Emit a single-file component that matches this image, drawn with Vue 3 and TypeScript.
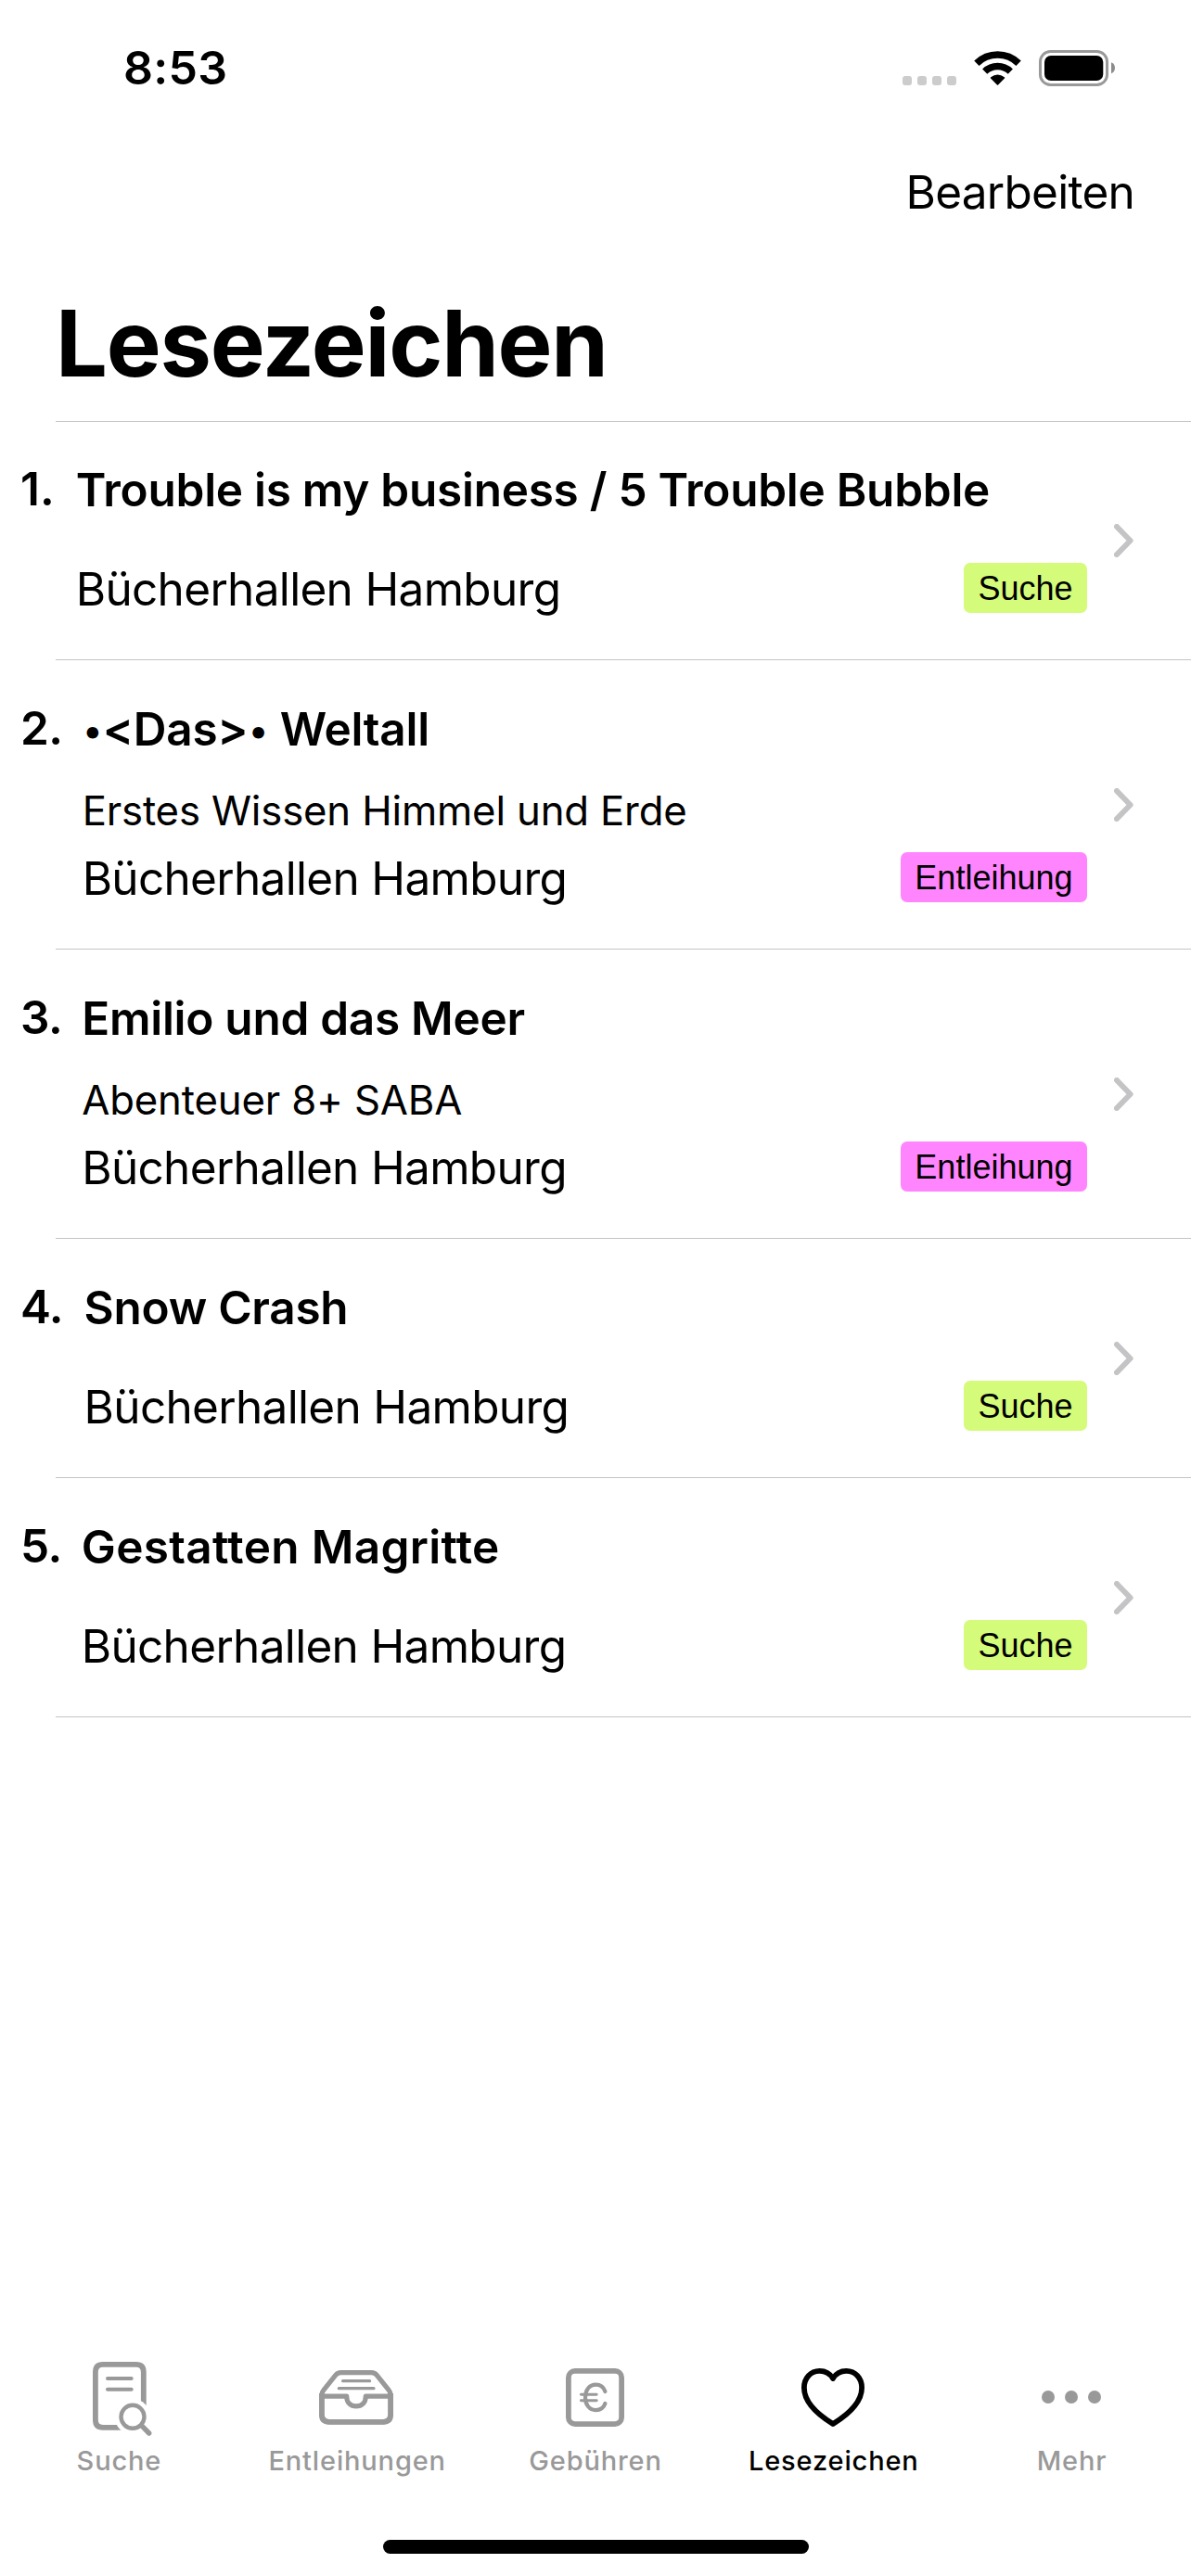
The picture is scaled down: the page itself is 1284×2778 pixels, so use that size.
<script setup lang="ts">
type Origin = 'Suche' | 'Entleihung'

interface Bookmark {
  title: string
  subtitle?: string
  library: string
  origin: Origin
}

const bookmarks: Bookmark[] = [
  { title: 'Trouble is my business / 5 Trouble Bubble', library: 'Bücherhallen Hamburg', origin: 'Suche' },
  { title: '•<Das>• Weltall', subtitle: 'Erstes Wissen Himmel und Erde', library: 'Bücherhallen Hamburg', origin: 'Entleihung' },
  { title: 'Emilio und das Meer', subtitle: 'Abenteuer 8+ SABA', library: 'Bücherhallen Hamburg', origin: 'Entleihung' },
  { title: 'Snow Crash', library: 'Bücherhallen Hamburg', origin: 'Suche' },
  { title: 'Gestatten Magritte', library: 'Bücherhallen Hamburg', origin: 'Suche' },
]

// Sorting marks in catalogue titles are set smaller than the letters.
const titleParts = (title: string): string[] => title.split(/(•)/).filter((part) => part !== '')
</script>

<template>
  <div class="screen">
    <header class="status">
      <span class="time">8:53</span>
      <div class="indicators">
        <svg class="cell" width="58" height="10" viewBox="0 0 58 10" fill="#ccc">
          <rect v-for="n in 4" :key="n" :x="(n - 1) * 16" y="0" width="10" height="10" rx="3" />
        </svg>
        <svg class="wifi" width="51" height="39" viewBox="0 0 51 39" fill="none" stroke="#000">
          <path d="M2.9 14.2A32.3 32.3 0 0 1 48.1 14.2" stroke-width="7.6" />
          <path d="M11.7 23.1A19.7 19.7 0 0 1 39.3 23.1" stroke-width="7.4" />
          <path d="M18.6 30Q25.5 24.8 32.4 30L25.5 37Z" fill="#000" stroke-width="1.6" stroke-linejoin="round" />
        </svg>
        <svg class="battery" width="82" height="39" viewBox="0 0 82 39">
          <rect x="1.5" y="1.5" width="72" height="36" rx="11" fill="none" stroke="#999" stroke-width="3" />
          <rect x="6" y="6" width="63.3" height="27" rx="7" />
          <path d="M78 13.3C80.6 14.2 82 16.6 82 19.3S80.6 24.4 78 25.3Z" fill="#8c8c8c" />
        </svg>
      </div>
    </header>

    <nav class="navbar"><button class="edit" type="button">Bearbeiten</button></nav>
    <h1 class="heading">Lesezeichen</h1>

    <div class="hairline"></div>
    <ol class="list">
      <li v-for="(b, i) in bookmarks" :key="b.title" class="item">
        <div class="row">
          <span class="number">{{ i + 1 }}.</span>
          <div class="body">
            <div class="title"><span v-for="(part, p) in titleParts(b.title)" :key="p" :class="{ mark: part === '•' }">{{ part }}</span></div>
            <div v-if="b.subtitle" class="subtitle">{{ b.subtitle }}</div>
            <div v-else class="spacer"></div>
            <div class="library">
              <span>{{ b.library }}</span>
              <span class="badge" :class="b.origin === 'Suche' ? 'lime' : 'pink'">{{ b.origin }}</span>
            </div>
          </div>
          <svg class="chevron" width="21" height="36" viewBox="0 0 21 36" fill="none" stroke="#c4c4c6" stroke-width="6" stroke-linecap="round" stroke-linejoin="round">
            <path d="M3 3L17.6 18L3 33" />
          </svg>
        </div>
        <div class="hairline"></div>
      </li>
    </ol>

    <footer class="tabs">
      <a class="tab">
        <span class="icon">
          <svg class="doc" width="64" height="80" viewBox="0 0 64 80" fill="none" stroke="currentColor" stroke-linecap="round">
            <path d="M54.8 50V11Q54.8 2.9 46.7 2.9H11Q2.9 2.9 2.9 11V62.7Q2.9 70.8 11 70.8H32" stroke-width="5.8" stroke-linecap="butt" />
            <path d="M16 18.1H41.7M16 29.8H41.7" stroke-width="4" />
            <circle cx="43" cy="59.3" r="19.2" fill="#fff" stroke="none" />
            <circle cx="43" cy="59.3" r="12.5" stroke-width="4.4" />
            <path d="M53 69.2L60.7 77" stroke-width="5.4" />
          </svg>
        </span>
        <span class="label">Suche</span>
      </a>
      <a class="tab">
        <span class="icon">
          <svg class="tray" width="80" height="59" viewBox="0 0 80 59" fill="none" stroke="currentColor">
            <path d="M2.9 26.5V47.8Q2.9 55.8 10.9 55.8H69.1Q77.1 55.8 77.1 47.8V26.5Q77.1 23.9 75 21.3L62.2 5.4Q60 2.7 56.5 2.7H23.5Q20 2.7 17.8 5.4L5 21.3Q2.9 23.9 2.9 26.5Z" stroke-width="5.2" />
            <path d="M2.9 25V47.8Q2.9 55.8 10.9 55.8H69.1Q77.1 55.8 77.1 47.8V25" stroke-width="5.8" />
            <path d="M4 28.2H29.7C29.7 35 34 38.9 40 38.9S50.3 35 50.3 28.2H76" stroke-width="5.2" stroke-linejoin="round" />
            <path d="M25.6 11.7H54.6M21.3 19.7H59" stroke-width="3.2" stroke-linecap="round" />
          </svg>
        </span>
        <span class="label">Entleihungen</span>
      </a>
      <a class="tab">
        <span class="icon">
          <svg width="63" height="63" viewBox="0 0 63 63" fill="none" stroke="currentColor" stroke-linecap="round">
            <rect x="2.9" y="2.9" width="57.2" height="57.2" rx="7" stroke-width="5.8" />
            <path d="M42.4 25C40.8 20.3 37 17.7 32.3 17.7C25.5 17.7 21 23.3 21 31.4S25.5 45.1 32.3 45.1C37 45.1 40.8 42.6 42.4 38" stroke-width="4.2" />
            <path d="M16.4 28.3H33.2M16.4 34.7H33.2" stroke-width="2.9" />
          </svg>
        </span>
        <span class="label">Gebühren</span>
      </a>
      <a class="tab active">
        <span class="icon">
          <svg class="heart" width="68" height="63" viewBox="0 0 68 63" fill="none" stroke="currentColor" stroke-width="5.8">
            <path d="M34 11C31 6 25.8 2.9 19.6 2.9C10 2.9 2.9 10.5 2.9 21C2.9 35.5 15.5 48.6 34 60C52.5 48.6 65.1 35.5 65.1 21C65.1 10.5 58 2.9 48.4 2.9C42.2 2.9 37 6 34 11Z" stroke-linejoin="round" />
          </svg>
        </span>
        <span class="label">Lesezeichen</span>
      </a>
      <a class="tab">
        <span class="icon">
          <svg class="dots" width="64" height="14" viewBox="0 0 64 14" fill="currentColor">
            <circle cx="7" cy="7" r="7" /><circle cx="32" cy="7" r="7" /><circle cx="57" cy="7" r="7" />
          </svg>
        </span>
        <span class="label">Mehr</span>
      </a>
    </footer>
    <div class="home"></div>
  </div>
</template>

<style>
body { margin: 0; background: #fff; }
</style>

<style scoped>
.screen {
  width: 1284px;
  height: 2778px;
  display: flex;
  flex-direction: column;
  background: #fff;
  color: #000;
  font-family: Inter, "Liberation Sans", sans-serif;
  font-size: 49.5px;
  overflow: hidden;
}
svg { display: block; flex: none; }
.status {
  height: 146px;
  display: flex;
  align-items: center;
  justify-content: space-between;
  box-sizing: border-box;
  padding: 0 82px 0 133px;
}
.time { font-size: 50px; font-weight: 600; letter-spacing: 0.3px; }
.indicators { display: flex; align-items: flex-end; }
.cell { margin: 0 19px 1px 0; }
.wifi { margin-right: 19px; }
.navbar {
  height: 122px;
  display: flex;
  align-items: center;
  justify-content: flex-end;
  padding-right: 61px;
}
.edit {
  border: 0;
  padding: 0;
  background: none;
  color: inherit;
  font: inherit;
  letter-spacing: -0.75px;
}
.heading {
  margin: 0;
  padding: 42px 0 24px 60px;
  font-size: 99px;
  line-height: 120px;
  font-weight: 700;
  letter-spacing: -1.25px;
}
.hairline { height: 1px; margin-left: 60px; background: #c4c4c6; }
.list { margin: 0; padding: 0; list-style: none; }
.row {
  display: flex;
  align-items: flex-start;
  padding: 44px 62px 49px 22px;
}
.item:first-child .row { padding-top: 43px; }
.number { font-weight: 600; line-height: 58px; margin-right: 21px; letter-spacing: -0.5px; }
.item:first-child .number { margin-right: 23px; letter-spacing: 0; }
.item:nth-child(4) .number { margin-right: 22.5px; }
.body { flex: 1; min-width: 0; }
.title { font-weight: 600; line-height: 60px; height: 60px; white-space: pre; letter-spacing: -0.27px; }
.mark { font-size: 40px; letter-spacing: 1px; position: relative; top: -2px; margin-left: 1px; }
.item:last-child .title { letter-spacing: 0.33px; }
.subtitle { margin: 36.5px 0 23.5px; font-size: 43.7px; line-height: 44px; letter-spacing: -0.16px; }
.spacer { height: 50px; }
.library {
  height: 54px;
  line-height: 54px;
  display: flex;
  align-items: flex-start;
  justify-content: space-between;
  letter-spacing: -0.68px;
}
.badge {
  margin-top: -1px;
  padding: 0 15.5px;
  height: 54px;
  line-height: 56px;
  border-radius: 7px;
  font-family: "Liberation Sans", Arial, sans-serif;
  font-size: 36px;
  letter-spacing: 0;
}
.lime { background: #d4fb79; }
.pink { background: #ff85ff; }
.chevron { align-self: center; margin: 6px 0 0 29px; }
.tabs { display: flex; margin-top: auto; color: #999; }
.tab {
  flex: 1 1 0;
  display: flex;
  flex-direction: column;
  align-items: center;
}
.tab.active { color: #000; }
.icon { height: 90px; display: flex; align-items: center; }
.doc { margin: 3px 0 0 7px; }
.tray { margin-right: 2px; }
.heart { margin-right: 1px; }
.dots { margin-right: 1px; }
.label { font-size: 29px; line-height: 40px; font-weight: 500; letter-spacing: 0.85px; margin: 4px 0 65px; }
.home { width: 459px; height: 15px; margin: 0 auto 24px; border-radius: 8px; background: #000; }
</style>
